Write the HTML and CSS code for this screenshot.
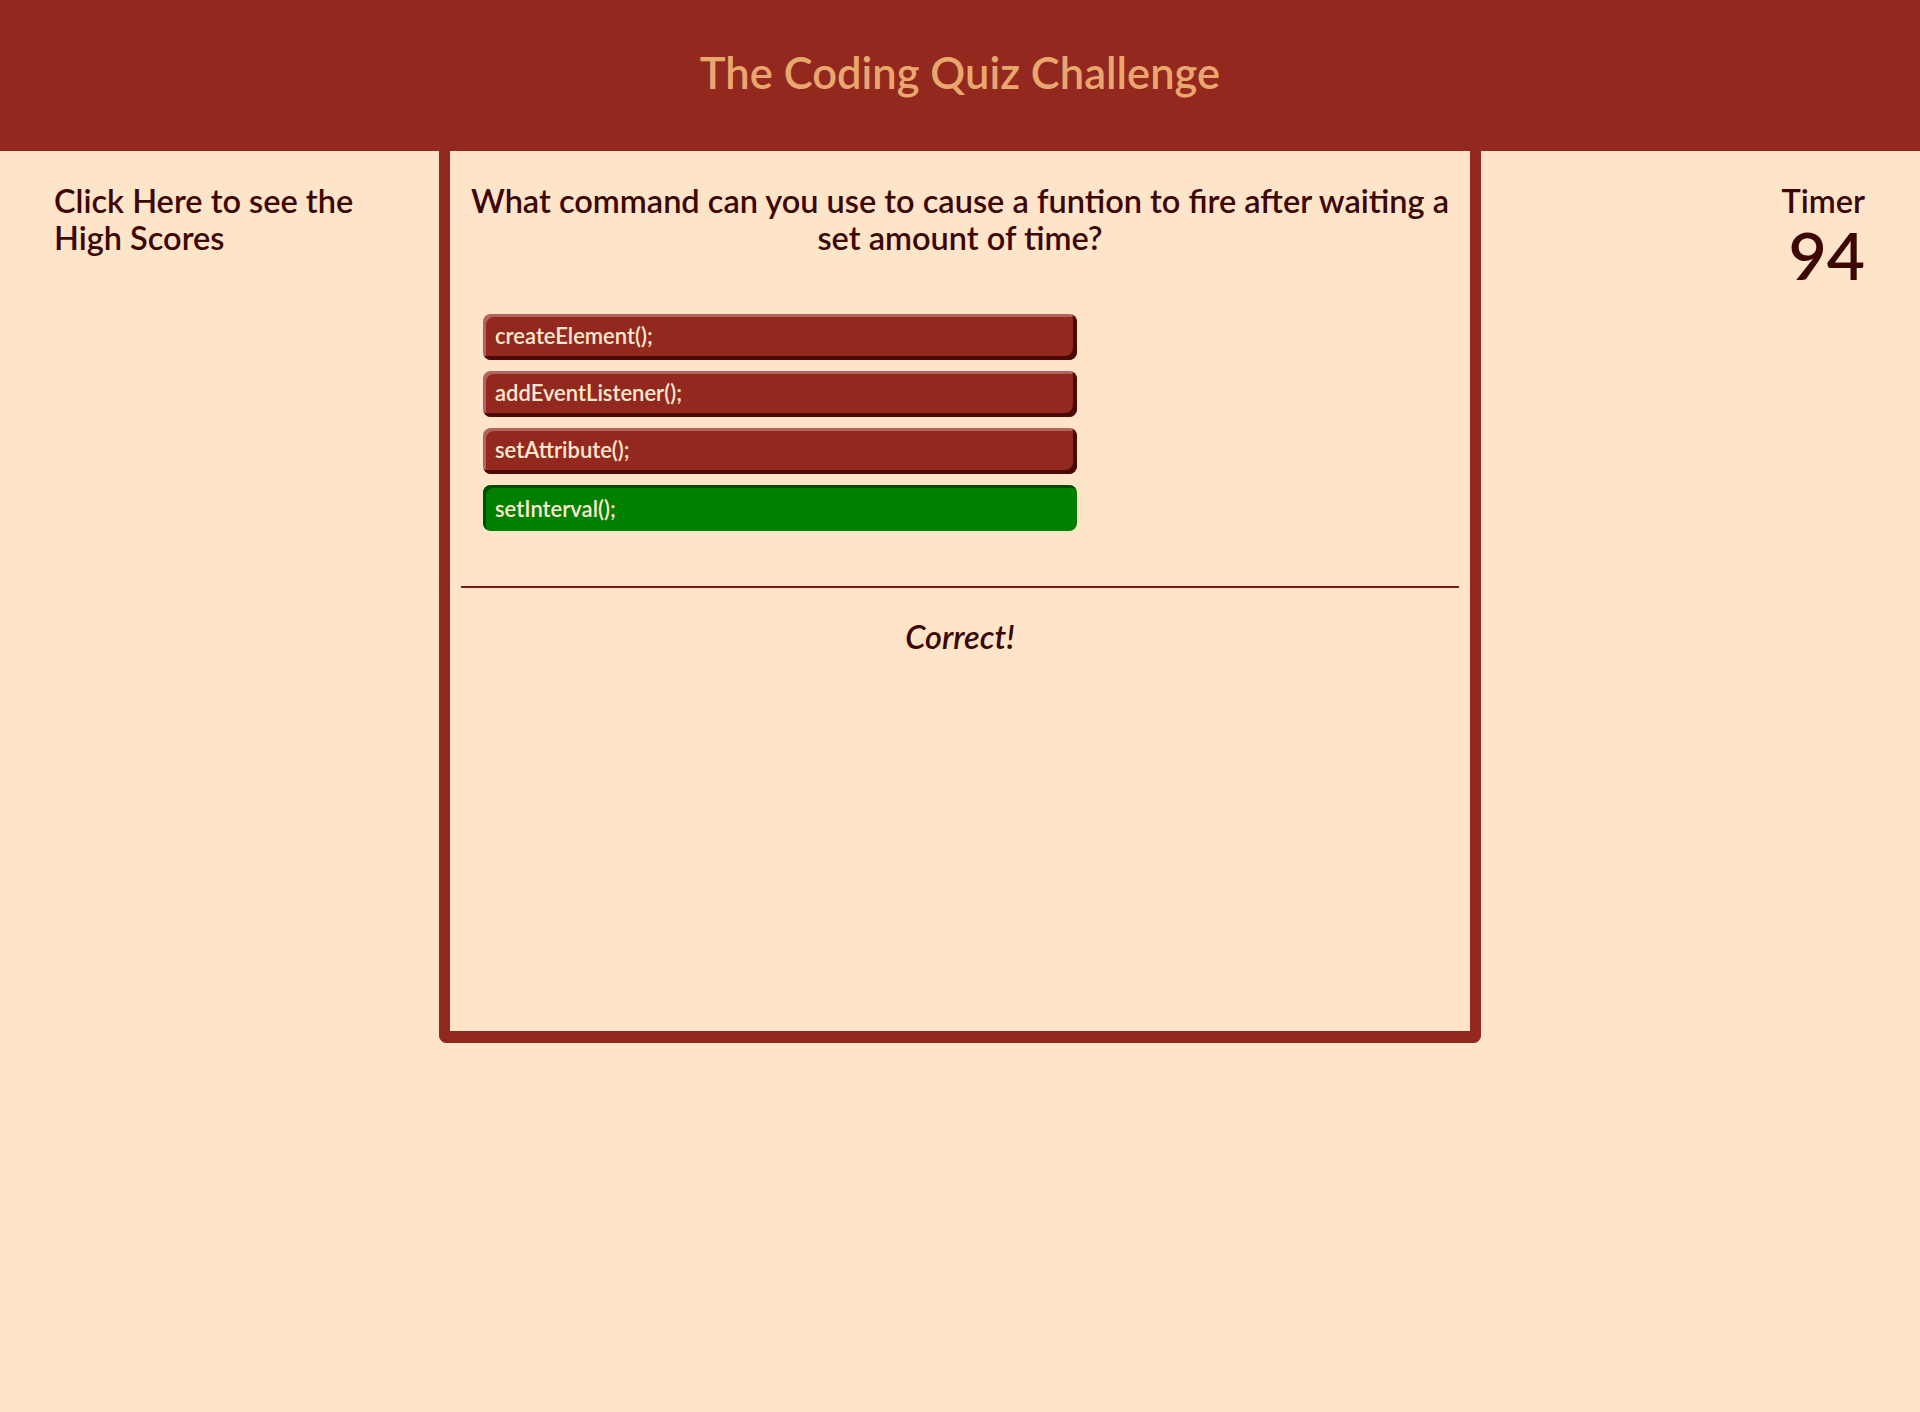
FILE: index.html
```html
<!DOCTYPE html>
<html lang="en">
<head>
<meta charset="utf-8">
<title>The Coding Quiz Challenge</title>
<link rel="stylesheet" href="styles.css">
</head>
<body>
<header class="site-header">
  <h1 class="site-title">The Coding Quiz Challenge</h1>
</header>
<main class="layout">
  <aside class="scores-col">
    <a class="scores-link" href="#">Click Here to see the High Scores</a>
  </aside>
  <section class="quiz-card">
    <h2 class="question">What command can you use to cause a funtion to fire after waiting a set amount of time?</h2>
    <ul class="answers">
      <li><button class="answer">createElement();</button></li>
      <li><button class="answer">addEventListener();</button></li>
      <li><button class="answer">setAttribute();</button></li>
      <li><button class="answer answer--correct">setInterval();</button></li>
    </ul>
    <hr class="divider">
    <p class="feedback">Correct!</p>
  </section>
  <aside class="timer-col">
    <div class="timer-label">Timer</div>
    <div class="timer-value">94</div>
  </aside>
</main>
</body>
</html>
```
FILE: styles.css
```css
* { box-sizing: border-box; }

html, body {
  margin: 0;
  padding: 0;
}

body {
  background: #fee5ca;
  color: #3d0704;
  font-family: Lato, "Open Sans", sans-serif;
  min-height: 1412px;
}

.site-header {
  height: 151px;
  background: #93281f;
  display: flex;
  align-items: center;
  justify-content: center;
}

.site-title {
  margin: 0;
  font-size: 43.5px;
  font-weight: 600;
  color: #e9a66f;
  padding-bottom: 8px;
}

.layout {
  display: grid;
  grid-template-columns: 1fr 1042px 1fr;
}

.scores-col {
  padding: 31px 20px 0 54px;
}

.scores-link {
  display: block;
  color: #3d0704;
  text-decoration: none;
  font-size: 32.5px;
  font-weight: 600;
  line-height: 37px;
  max-width: 340px;
}

.quiz-card {
  height: 892px;
  border: 11px solid #93281f;
  border-top: 0;
  border-bottom-width: 12px;
  border-radius: 0 0 8px 8px;
  padding: 31px 11px 0;
  display: flex;
  flex-direction: column;
}

.question {
  margin: 0;
  font-size: 32.5px;
  font-weight: 600;
  line-height: 37px;
  text-align: center;
}

.answers {
  list-style: none;
  margin: 58px 0 0;
  padding: 0 0 0 22px;
  display: flex;
  flex-direction: column;
  gap: 11px;
}

.answer {
  display: block;
  width: 594px;
  height: 46px;
  border: 0;
  border-radius: 8px;
  background: #93281f;
  color: #ffe8cf;
  font-family: Lato, "Open Sans", sans-serif;
  font-size: 22px;
  font-weight: 600;
  text-align: left;
  padding: 0 0 3px 12px;
  box-shadow: inset -4px -4px 0 #4a0905, inset 3px 3px 0 rgba(255, 255, 255, 0.28);
  cursor: pointer;
}

.answer--correct {
  background: #008000;
  box-shadow: inset 3px 3px 0 #004f00;
  padding: 0 0 0 12px;
}

.divider {
  margin: 55px 0 0;
  border: 0;
  height: 2px;
  background: #7a1a12;
}

.feedback {
  margin: 30px 0 0;
  text-align: center;
  font-style: italic;
  font-weight: 600;
  font-size: 32.5px;
  line-height: 37px;
}

.timer-col {
  padding: 31px 55px 0 20px;
  text-align: right;
}

.timer-label {
  font-size: 32.5px;
  font-weight: 600;
  line-height: 37px;
}

.timer-value {
  font-size: 66px;
  font-weight: 600;
  line-height: 66px;
  margin-top: 3px;
}
```
